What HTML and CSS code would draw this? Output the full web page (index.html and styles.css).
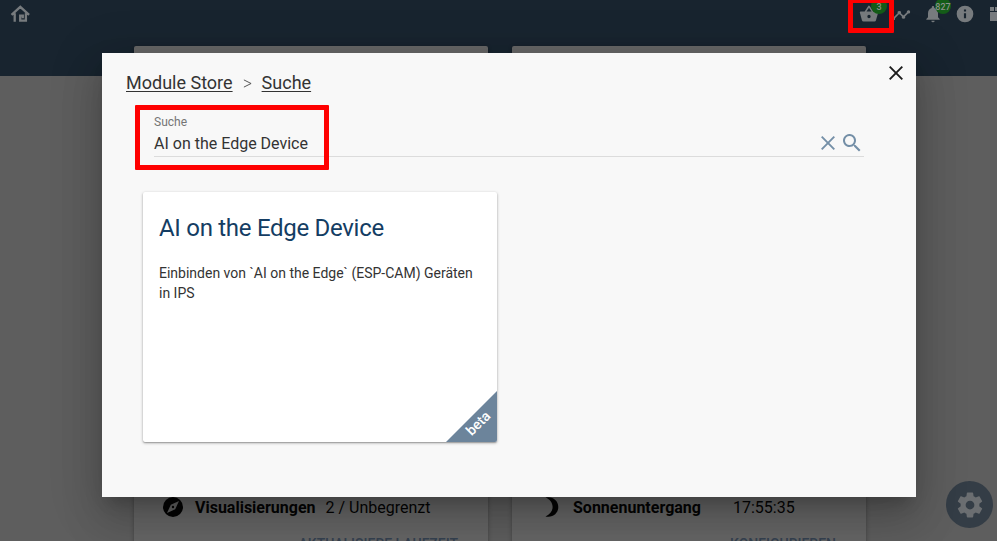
FILE: index.html
```
<!DOCTYPE html>
<html lang="de">
<head>
<meta charset="utf-8">
<title>Module Store</title>
<link rel="stylesheet" href="styles.css">
</head>
<body>
<div class="page">
  <header class="topbar">
    <svg class="home" viewBox="0 0 20 18"><path d="M1.500 9.800L10.300 1.800l8.800 8M4.700 16.800V8.200M15.900 8.200v7.500H10.200v-5h2.600v2.600" fill="none" stroke="currentColor" stroke-width="2.300"/></svg>
    <nav class="tools">
      <span class="tool"><svg viewBox="0 0 24 24"><path d="M17.2 9l-4.400-6.600a1 1 0 0 0-1.700 0L6.800 9H2c-.6 0-1 .5-1 1v.3l2.500 9.200A2 2 0 0 0 5.500 21h13a2 2 0 0 0 1.900-1.500L23 10.300V10c0-.5-.4-1-1-1h-4.800zM9 9l3-4.400L15 9H9zm3 8a2 2 0 1 1 0-4 2 2 0 0 1 0 4z"/></svg><b class="badge">3</b></span>
      <span class="tool"><svg viewBox="0 0 24 24"><path d="M23 8a2 2 0 0 1-2.500 1.900l-3.600 3.600a2 2 0 1 1-3.800 0l-2.600-2.600a2 2 0 0 1-1 0L4.900 15.500a2 2 0 1 1-1.400-1.400l4.600-4.600a2 2 0 1 1 3.800 0l2.600 2.600a2 2 0 0 1 1 0l3.600-3.600A2 2 0 1 1 23 8z" transform="translate(0 1.500)"/></svg></span>
      <span class="tool"><svg viewBox="0 0 24 24"><path d="M12 22a2 2 0 0 0 2-2h-4a2 2 0 0 0 2 2zm6-6v-5c0-3.100-1.600-5.600-4.500-6.300V4a1.500 1.500 0 0 0-3 0v.7C7.600 5.400 6 7.900 6 11v5l-2 2v1h16v-1l-2-2z"/></svg><b class="badge">827</b></span>
      <span class="tool"><svg viewBox="0 0 24 24"><path d="M12 2a10 10 0 1 0 0 20 10 10 0 0 0 0-20zm1.300 15h-2.600v-6h2.600v6zm0-8h-2.600V6.500h2.600V9z"/></svg></span>
      <span class="tool"><svg viewBox="0 0 24 24"><path d="M3.600 3.600h4.800v4.800H3.600zM9.600 3.600h4.800v4.800H9.600zM15.600 3.600h4.800v4.800h-4.800zM3.600 9.600h16.800v10.800H3.600z"/></svg></span>
    </nav>
  </header>
  <main class="tiles">
    <section class="tile">
      <div class="fact"><svg class="fact-icon" viewBox="0 0 20 20"><circle cx="10" cy="10" r="10"/><path class="needle" d="M16 4l-3.800 8.200L4 16l3.800-8.200z"/><circle cx="10" cy="10" r="1.200"/></svg><b>Visualisierungen</b><span class="value">2 / Unbegrenzt</span></div>
      <div class="action">AKTUALISIERE LAUFZEIT</div>
    </section>
    <section class="tile">
      <div class="fact"><svg class="fact-icon" viewBox="0 0 20 20"><path d="M4.500.6C12-1 17.300 4 17.300 10S12 21 4.500 19.400C14 15.500 14 4.500 4.500.6z"/></svg><b>Sonnenuntergang</b><span class="value time">17:55:35</span></div>
      <div class="action">KONFIGURIEREN</div>
    </section>
  </main>
</div>
<button class="fab" aria-label="Einstellungen"><svg viewBox="0 0 24 24"><path fill-rule="evenodd" d="M19.430 12.980c.04-.32.07-.64.07-.98s-.03-.66-.07-.98l2.110-1.650c.19-.15.24-.42.12-.64l-2-3.460c-.12-.22-.39-.3-.61-.22l-2.490 1c-.52-.4-1.080-.73-1.690-.98l-.38-2.650C14.460 2.180 14.250 2 14 2h-4c-.25 0-.46.18-.49.42l-.38 2.650c-.61.25-1.170.59-1.690.98l-2.490-1c-.23-.09-.49 0-.61.22l-2 3.460c-.13.22-.07.49.12.64l2.110 1.650c-.04.32-.07.65-.07.98s.03.66.07.98l-2.110 1.650c-.19.15-.24.42-.12.64l2 3.460c.12.22.39.3.61.22l2.490-1c.52.4 1.080.73 1.690.98l.38 2.650c.03.24.24.42.49.42h4c.25 0 .46-.18.49-.42l.38-2.650c.61-.25 1.170-.59 1.690-.98l2.490 1c.23.09.49 0 .61-.22l2-3.460c.12-.22.07-.49-.12-.64l-2.110-1.650zM12 15.500a3.500 3.500 0 1 1 0-7 3.500 3.500 0 0 1 0 7z"/></svg></button>
<div class="dialog" role="dialog">
  <div class="dialog-head">
    <nav class="crumbs"><a>Module Store</a><span class="sep"><svg viewBox="0 0 10 10"><path d="M1 1l8 4-8 4"/></svg></span><a>Suche</a></nav>
    <svg class="close" viewBox="0 0 14 14"><path d="M.7.7l12.600 12.600M13.300.7L.7 13.300"/></svg>
  </div>
  <div class="search">
    <div class="field"><label>Suche</label><div class="query">AI on the Edge Device</div></div>
    <svg class="clear" viewBox="0 0 14 14"><path d="M.7.7l12.600 12.600M13.300.7L.7 13.300"/></svg>
    <svg class="find" viewBox="3 3 18 18"><path d="M15.500 14h-.79l-.28-.27A6.500 6.500 0 1 0 13.730 14.430l.27.28v.79l5 4.990L20.490 19l-4.990-5zm-6 0a4.500 4.500 0 1 1 0-9 4.500 4.500 0 0 1 0 9z"/></svg>
  </div>
  <article class="module">
    <h2>AI on the Edge Device</h2>
    <p>Einbinden von `AI on the Edge` (ESP-CAM) Geräten in IPS</p>
    <div class="corner"><span>beta</span></div>
  </article>
</div>
<div class="mark mark-store"></div>
<div class="mark mark-search"></div>
</body>
</html>
```
FILE: styles.css
```
* { box-sizing: border-box; }
body { margin: 0; width: 997px; height: 541px; overflow: hidden; position: relative; font-family: Roboto, "Liberation Sans", sans-serif; background: #5e5e5e; }
svg { display: block; fill: currentColor; flex: none; }
.page { height: 541px; overflow: hidden; color: #050505; }
.topbar { height: 76px; background: #18242f; color: #777b7e; display: flex; justify-content: space-between; align-items: flex-start; }
.home { width: 20px; height: 18px; margin: 5px 0 0 10px; }
.tools { display: flex; gap: 12px; margin: 4px -10px 0 0; }
.tool { position: relative; width: 20px; height: 20px; }
.tool svg { width: 20px; height: 20px; }
.badge { position: absolute; left: 12px; top: -6px; width: 16px; height: 16px; border-radius: 50%; background: #145c18; color: #8b918b; font-size: 9px; font-weight: 500; line-height: 18px; text-align: center; }
.tiles { display: flex; gap: 24px; margin: -30px 0 0 134px; height: 520px; }
.tile { width: 354px; background: #666; border-radius: 2px; padding-top: 451px; box-shadow: 0 1px 4px rgba(0,0,0,.3); }
.fact { height: 20px; display: flex; align-items: center; padding-left: 29px; font-size: 16px; line-height: 20px; white-space: nowrap; }
.fact-icon { width: 20px; height: 20px; margin-right: 12px; }
.fact b { font-weight: 700; padding-top: 2px; }
.needle { fill: #626262; }
.value { margin-left: 10px; padding-top: 2px; }
.value.time { margin-left: 32px; }
.action { margin: 17px 30px 0 0; text-align: right; font-size: 14px; line-height: 20px; font-weight: 500; color: #354251; }
.fab { position: absolute; left: 946px; top: 481px; width: 47px; height: 47px; padding: 0; border: 0; border-radius: 50%; background: #343d46; color: #6b6e71; display: grid; place-items: center; }
.fab svg { width: 30px; height: 30px; }
.dialog { position: absolute; left: 102px; top: 53px; width: 814px; height: 444px; background: #f8f8f8; color: #333; box-shadow: 0 11px 15px -7px rgba(0,0,0,.2), 0 24px 38px 3px rgba(0,0,0,.14), 0 9px 46px 8px rgba(0,0,0,.12); }
.dialog-head { display: flex; justify-content: space-between; padding: 13px 13px 0 24px; height: 61px; }
.crumbs { display: flex; font-size: 18px; line-height: 34px; height: 34px; white-space: nowrap; }
.crumbs a { text-decoration: underline 1px; text-underline-offset: 2px; }
.sep { width: 29px; padding: 13px 0 0 10px; }
.sep svg { width: 9px; height: 9px; fill: none; stroke: #444; }
.close { width: 14px; height: 14px; color: #1b1b1b; }
.close path, .clear path { fill: none; stroke: currentColor; stroke-width: 1.900; }
.search { display: flex; align-items: flex-start; margin: 0 52px; height: 43px; border-bottom: 1px solid #dcdcdc; color: #748fa7; }
.field { flex: 1; }
.field label { display: block; font-size: 12px; line-height: 16px; color: #757575; }
.query { font-size: 16px; line-height: 20px; margin-top: 4px; color: #333; }
.clear { width: 14px; height: 14px; margin: 22px 8px 0 0; }
.find { width: 18px; height: 18px; margin: 20px 3px 0 0; }
.module { position: relative; width: 354px; height: 250px; margin: 35px 0 0 41px; padding: 22px 16px; background: #fff; border-radius: 2px; overflow: hidden; }
.dialog .module { box-shadow: 0 1px 3px rgba(0,0,0,.35), 0 1px 1px rgba(0,0,0,.15); }
h2 { margin: 0; font-size: 24px; line-height: 28px; font-weight: 400; letter-spacing: -.29px; color: #143d63; }
p { margin: 21px 0 0; font-size: 14px; line-height: 20px; }
.corner { position: absolute; right: 0; bottom: 0; width: 51px; height: 51px; background: #6c849b; clip-path: polygon(100% 0, 100% 100%, 0 100%); }
.corner span { position: absolute; left: 16px; top: 24px; width: 32px; text-align: center; font-size: 14px; line-height: 16px; font-weight: 500; color: #fff; transform: rotate(-45deg); }
.mark { position: absolute; border: 5px solid #f00; border-radius: 1px; }
.mark-store { left: 848px; top: -2px; width: 46px; height: 35px; }
.mark-search { left: 135px; top: 105px; width: 194px; height: 65px; }
```
